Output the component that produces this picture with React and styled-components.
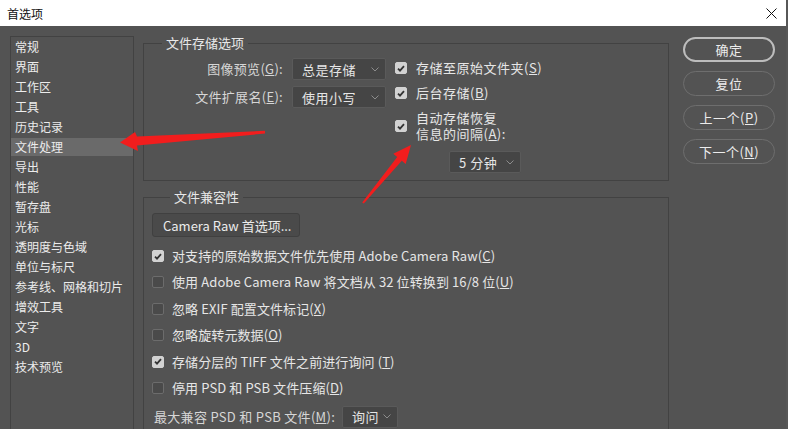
import React from "react";
import styled, { createGlobalStyle } from "styled-components";

const Global = createGlobalStyle`
  html, body { margin: 0; padding: 0; background: #575757; }
  body { font-family: "Noto Sans CJK SC", "Noto Sans", sans-serif; }
`;

const Window = styled.div`
  position: relative;
  width: 786px;
  height: 429px;
  overflow: hidden;
  display: flex;
  flex-direction: column;
`;

const TitleBar = styled.div`
  height: 26px;
  flex: none;
  background: #ffffff;
  display: flex;
  align-items: center;
  justify-content: space-between;
  padding: 0 9px 0 7px;
  font-size: 12px;
  color: #111;
`;

const Body = styled.div`
  flex: 1;
  background: #535353;
  display: flex;
  align-items: flex-start;
  padding: 10px 0 0 10px;
  overflow: hidden;
  color: #e4e4e4;
`;

const Sidebar = styled.div`
  width: 124px;
  height: 420px;
  box-sizing: border-box;
  border: 1px solid #424242;
  padding-top: 1px;
  display: flex;
  flex-direction: column;
  gap: 2px;
  flex: none;
`;

const NavItem = styled.div`
  height: 18px;
  line-height: 18px;
  padding-left: 4px;
  font-size: 12px;
  color: #ececec;
  background: ${({ $active }) => ($active ? "#6a6a6a" : "transparent")};
`;

const Main = styled.div`
  width: 526px;
  margin-left: 9px;
  flex: none;
  display: flex;
  flex-direction: column;
  gap: 9px;
`;

const Group = styled.fieldset`
  margin: 0;
  min-width: 0;
  box-sizing: border-box;
  border: 1px solid #424242;
  padding: ${({ $pad }) => $pad};
`;

const Legend = styled.legend`
  margin-left: 18px;
  padding: 0 4px;
  font-size: 13px;
  line-height: 14px;
  color: #e8e8e8;
`;

const StoreRow = styled.div`
  display: flex;
  align-items: flex-start;
`;

const FieldGrid = styled.div`
  display: grid;
  grid-template-columns: 139px 94px;
  column-gap: 9px;
  row-gap: 6px;
`;

const Label = styled.div`
  height: 22px;
  line-height: 22px;
  text-align: right;
  font-size: 13px;
  letter-spacing: 0.3px;
  color: #d6d6d6;
  white-space: nowrap;
`;

const Dropdown = styled.div`
  width: ${({ $w }) => $w}px;
  height: 22px;
  box-sizing: border-box;
  background: #454545;
  border: 1px solid #5a5a5a;
  border-radius: 2px;
  display: flex;
  align-items: center;
  justify-content: space-between;
  padding: 0 6px 0 9px;
  font-size: 13px;
  letter-spacing: 0.5px;
  color: #e6e6e6;
  flex: none;
`;

const CheckCol = styled.div`
  margin-left: 9px;
  display: flex;
  flex-direction: column;
`;

const CheckRow = styled.div`
  display: flex;
  align-items: center;
  gap: ${({ $gap }) => $gap || 8}px;
  min-height: ${({ $h }) => $h || 18}px;
  margin-top: ${({ $mt }) => $mt || 0}px;
  font-size: 13px;
  line-height: 18px;
  letter-spacing: ${({ $ls }) => ($ls === undefined ? 0.5 : $ls)}px;
  color: #e6e6e6;
  white-space: nowrap;
`;

const Text = styled.span`
  line-height: ${({ $lh }) => $lh || 18}px;
`;

const Box = styled.span`
  width: 12px;
  height: 12px;
  box-sizing: border-box;
  border-radius: 2px;
  flex: none;
  display: flex;
  align-items: center;
  justify-content: center;
  background: ${({ $on }) => ($on ? "#d2d2d2" : "#4a4a4a")};
  border: 1px solid ${({ $on }) => ($on ? "#d2d2d2" : "#6c6c6c")};
`;

const IntervalWrap = styled.div`
  margin: 9px 0 0 54px;
`;

const CompatList = styled.div`
  display: flex;
  flex-direction: column;
  gap: 8.4px;
  margin-top: 10px;
`;

const RawButton = styled.div`
  width: 148px;
  height: 24px;
  box-sizing: border-box;
  background: #4a4a4a;
  border: 1px solid #404040;
  border-radius: 3px;
  display: flex;
  align-items: center;
  padding-left: 10px;
  font-size: 13px;
  color: #ececec;
`;

const MaxRow = styled.div`
  display: flex;
  align-items: center;
  margin-top: 9px;
  padding-left: 2px;
`;

const MaxLabel = styled.div`
  width: 188px;
  font-size: 13px;
  line-height: 18px;
  letter-spacing: 0.3px;
  color: #d6d6d6;
  white-space: nowrap;
`;

const Buttons = styled.div`
  margin: 1px 0 0 14px;
  display: flex;
  flex-direction: column;
  gap: 9px;
  flex: none;
`;

const PillButton = styled.div`
  width: 92px;
  height: 25px;
  line-height: 21px;
  box-sizing: border-box;
  border-radius: 13px;
  border: ${({ $primary }) => ($primary ? "2px solid #bdbdbd" : "1px solid #6e6e6e")};
  padding-top: ${({ $primary }) => ($primary ? 0 : 1)}px;
  text-align: center;
  font-size: 13px;
  letter-spacing: 0.5px;
  color: #ececec;
`;

const Overlay = styled.svg`
  position: absolute;
  left: 0;
  top: 0;
  pointer-events: none;
`;

const Chevron = () => (
  <svg width="8" height="5" viewBox="0 0 8 5">
    <polyline points="0.5,0.5 4,4 7.5,0.5" fill="none" stroke="#8c8c8c" strokeWidth="1" />
  </svg>
);

const Check = ({ on }) => (
  <Box $on={on}>
    {on && (
      <svg width="8" height="7" viewBox="0 0 8 7">
        <path d="M1 3.6 L3 5.6 L7 1.2" fill="none" stroke="#333" strokeWidth="1.8" />
      </svg>
    )}
  </Box>
);

const Key = ({ k }) => (
  <>
    (<u>{k}</u>)
  </>
);

const navItems = [
  "常规", "界面", "工作区", "工具", "历史记录", "文件处理", "导出", "性能",
  "暂存盘", "光标", "透明度与色域", "单位与标尺", "参考线、网格和切片",
  "增效工具", "文字", "3D", "技术预览",
];

const compat = [
  { on: true, text: "对支持的原始数据文件优先使用 Adobe Camera Raw", k: "C" },
  { on: false, text: "使用 Adobe Camera Raw 将文档从 32 位转换到 16/8 位", k: "U" },
  { on: false, text: "忽略 EXIF 配置文件标记", k: "X" },
  { on: false, text: "忽略旋转元数据", k: "O" },
  { on: true, text: "存储分层的 TIFF 文件之前进行询问 ", k: "T" },
  { on: false, text: "停用 PSD 和 PSB 文件压缩", k: "D" },
];

export default function App() {
  return (
    <Window>
      <Global />
      <TitleBar>
        <span>首选项</span>
        <svg width="11" height="11" viewBox="0 0 11 11">
          <path d="M0.5 0.5 L10.5 10.5 M10.5 0.5 L0.5 10.5" stroke="#111" strokeWidth="1" />
        </svg>
      </TitleBar>
      <Body>
        <Sidebar>
          {navItems.map((n) => (
            <NavItem key={n} $active={n === "文件处理"}>{n}</NavItem>
          ))}
        </Sidebar>

        <Main>
          <Group $pad="8px 0 7px 0">
            <Legend>文件存储选项</Legend>
            <StoreRow>
              <FieldGrid>
                <Label>图像预览<Key k="G" />:</Label>
                <Dropdown $w={94}><span>总是存储</span><Chevron /></Dropdown>
                <Label>文件扩展名<Key k="E" />:</Label>
                <Dropdown $w={94}><span>使用小写</span><Chevron /></Dropdown>
              </FieldGrid>
              <CheckCol>
                <CheckRow $h={20} $gap={9}><Check on /><Text>存储至原始文件夹<Key k="S" /></Text></CheckRow>
                <CheckRow $h={20} $gap={9} $mt={5}><Check on /><Text>后台存储<Key k="B" /></Text></CheckRow>
                <CheckRow $gap={9} $mt={7}>
                  <Check on />
                  <Text $lh={16}>自动存储恢复<br />信息的间隔<Key k="A" />:</Text>
                </CheckRow>
                <IntervalWrap>
                  <Dropdown $w={72}><span>5 分钟</span><Chevron /></Dropdown>
                </IntervalWrap>
              </CheckCol>
            </StoreRow>
          </Group>

          <Group $pad="9px 0 30px 8px">
            <Legend>文件兼容性</Legend>
            <RawButton>Camera Raw 首选项...</RawButton>
            <CompatList>
              {compat.map((c) => (
                <CheckRow key={c.k} $ls={0.1}>
                  <Check on={c.on} />
                  <Text>{c.text}<Key k={c.k} /></Text>
                </CheckRow>
              ))}
            </CompatList>
            <MaxRow>
              <MaxLabel>最大兼容 PSD 和 PSB 文件<Key k="M" />:</MaxLabel>
              <Dropdown $w={56}><span>询问</span><Chevron /></Dropdown>
            </MaxRow>
          </Group>
        </Main>

        <Buttons>
          <PillButton $primary>确定</PillButton>
          <PillButton>复位</PillButton>
          <PillButton>上一个<Key k="P" /></PillButton>
          <PillButton>下一个<Key k="N" /></PillButton>
        </Buttons>
      </Body>

      <Overlay width="786" height="429" viewBox="0 0 786 429">
        <polygon
          points="265,130.8 137,136.5 135,132 120,142.5 138,151 137,145.5 265,133.6"
          fill="#f21d1d"
        />
        <polygon
          points="411,145 405.7,164 401.8,160.8 363.8,203.6 362.2,202.4 397.2,157 393.3,153.8"
          fill="#f21d1d"
        />
      </Overlay>
    </Window>
  );
}
